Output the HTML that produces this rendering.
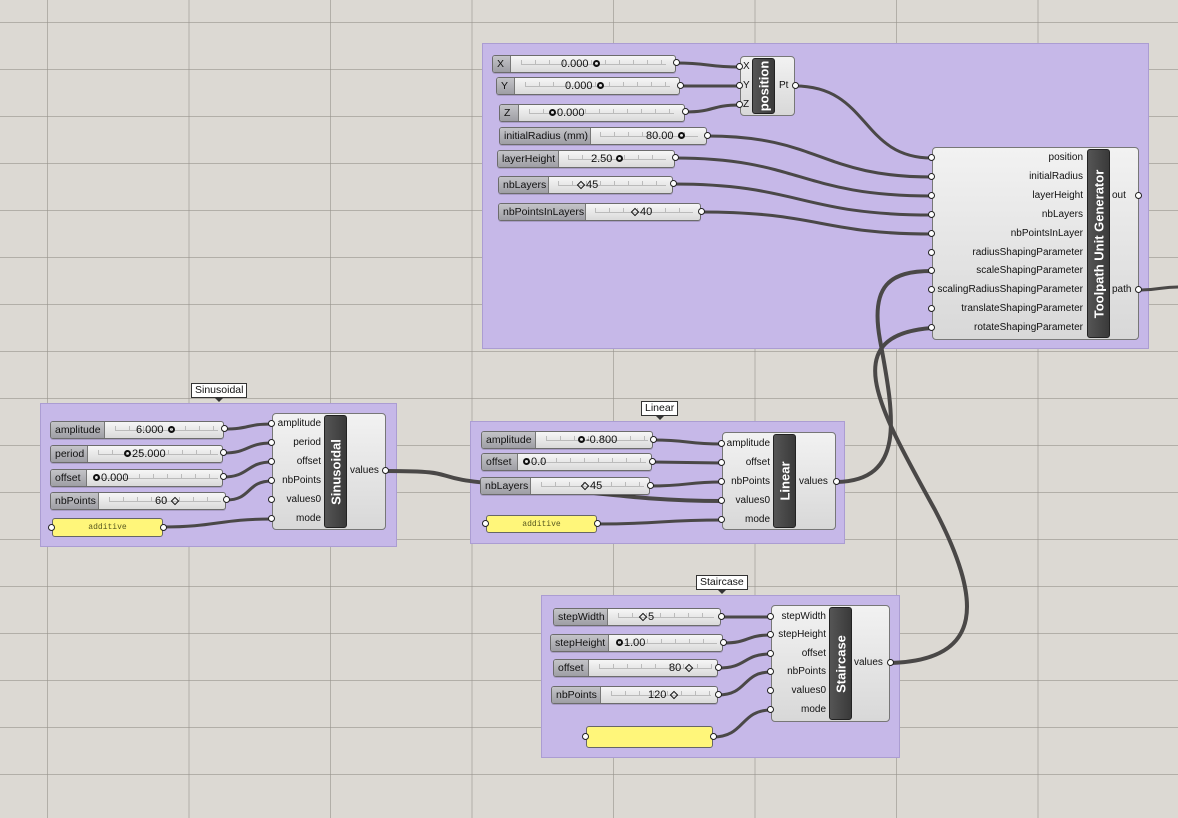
<!DOCTYPE html>
<html><head><meta charset="utf-8"><style>
*{box-sizing:border-box;margin:0;padding:0}
body{width:1178px;height:818px;overflow:hidden;position:relative;font-family:"Liberation Sans",sans-serif;
background-color:#dcd9d3;
background-image:linear-gradient(90deg,rgba(150,147,140,.6) 1px,transparent 1px),linear-gradient(0deg,rgba(150,147,140,.6) 1px,transparent 1px);
background-size:141.5px 47px;background-position:47px 23px}
.a{position:absolute}
.grp{position:absolute;background:#c6b8e8;border:1px solid #ab9dd2}
.tag{position:absolute;background:#fff;border:1px solid #333;font-size:10.5px;line-height:13px;padding:0 3px;color:#111}
.tag:after{content:"";position:absolute;left:50%;bottom:-5px;margin-left:-4px;border:4px solid transparent;border-top:4px solid #333;border-bottom:0}
.sl{position:absolute;height:18px;border:1px solid #6c6c6c;border-radius:3px;background:linear-gradient(#f6f6f6,#dadada);box-shadow:0 1px 0 rgba(0,0,0,.15)}
.sl .lb{position:absolute;left:0;top:0;bottom:0;background:linear-gradient(#c4c4c8,#9e9ea4);border-right:1px solid #777;border-radius:2px 0 0 2px;font-size:10.5px;line-height:16px;padding-left:4px;color:#111;white-space:nowrap;overflow:hidden}
.sl .tk{position:absolute;top:4px;height:5px;border-bottom:1px solid #bbb;background:repeating-linear-gradient(90deg,#bbb 0 1px,transparent 1px 14px)}
.sl .v{position:absolute;top:0;font-size:11px;line-height:16px;color:#111;white-space:nowrap}
i.c{display:inline-block;width:7px;height:7px;border:2px solid #111;border-radius:50%;margin:0 1px}
i.d{display:inline-block;width:6px;height:6px;border:1.5px solid #111;transform:rotate(45deg);margin:0 2px}
.nub{position:absolute;width:7px;height:7px;border:1.5px solid #222;border-radius:50%;background:#fff}
.cmp{position:absolute;border:1px solid #777;border-radius:4px;background:linear-gradient(#f2f2f2,#d8d8d8)}
.bar{position:absolute;background:linear-gradient(90deg,#555,#3a3a3a);border:1px solid #222;border-radius:3px}
.bar span{position:absolute;left:50%;top:50%;transform:translate(-50%,-50%) rotate(-90deg);color:#fff;font-weight:bold;font-size:13px;white-space:nowrap}
.pl{position:absolute;font-size:10px;color:#111;white-space:nowrap;line-height:12px}
.pan{position:absolute;background:#fff67a;border:1px solid #666;border-radius:3px;font-family:"Liberation Mono",monospace;font-size:8px;color:#5a5a20;text-align:center;line-height:18px}
</style></head><body>

<div class="grp" style="left:482px;top:43px;width:667px;height:306px"></div>
<div class="grp" style="left:40px;top:403px;width:357px;height:144px"></div>
<div class="tag" style="left:191px;top:383px">Sinusoidal</div>
<div class="grp" style="left:470px;top:421px;width:375px;height:123px"></div>
<div class="tag" style="left:641px;top:401px">Linear</div>
<div class="grp" style="left:541px;top:595px;width:359px;height:163px"></div>
<div class="tag" style="left:696px;top:575px">Staircase</div>

<svg class="a" style="left:0;top:0" width="1178" height="818" fill="none" stroke="#4a4847" stroke-linecap="round">
<g stroke-width="3">
<path d="M676,63 C710,63 706,67 740,67"/>
<path d="M680,86 L740,86"/>
<path d="M685,112 C715,112 710,105 740,105"/>
<path d="M795,86 C870,86 860,158 932,158"/>
<path d="M707,136 C820,136 820,177 932,177"/>
<path d="M675,158 C800,158 800,196 932,196"/>
<path d="M673,184 C800,184 800,215 932,215"/>
<path d="M701,212 C820,212 820,234 932,234"/>
<path d="M1138,290 C1160,290 1160,287 1178,287"/>
<path d="M224,429 C250,429 246,424 272,424"/>
<path d="M223,453 C250,453 246,443 272,443"/>
<path d="M223,477 C250,477 246,462 272,462"/>
<path d="M226,500 C252,500 246,481 272,481"/>
<path d="M163,527 C215,527 220,519 272,519"/>
<path d="M653,440 C690,440 685,444 722,444"/>
<path d="M652,462 L722,463"/>
<path d="M650,486 C690,486 685,482 722,482"/>
<path d="M597,524 C660,524 660,520 722,520"/>
<path d="M721,617 L771,617"/>
<path d="M723,643 C750,643 745,635 771,635"/>
<path d="M718,668 C748,668 742,654 771,654"/>
<path d="M718,695 C748,695 742,672 771,672"/>
<path d="M713,737 C745,737 740,710 771,710"/>
</g>
<g stroke-width="4">
<path d="M385,471 C470,471 420,478 500,484 C600,492 640,501 722,501"/>
<path d="M837,482 C905,480 895,420 880,340 C870,285 890,271 932,271"/>
<path d="M891,663 C985,660 982,600 935,510 C880,410 835,335 932,328"/>
</g>
</svg>

<div class="sl" style="left:492px;top:55px;width:184px"><div class="lb" style="width:18px">X</div><div class="tk" style="left:28px;width:145px"></div><div class="v" style="left:68px">0.000 <i class="c"></i></div></div>
<div class="sl" style="left:496px;top:77px;width:184px"><div class="lb" style="width:18px">Y</div><div class="tk" style="left:28px;width:145px"></div><div class="v" style="left:68px">0.000 <i class="c"></i></div></div>
<div class="sl" style="left:499px;top:104px;width:186px"><div class="lb" style="width:19px">Z</div><div class="tk" style="left:29px;width:145px"></div><div class="v" style="left:48px"><i class="c"></i>0.000</div></div>
<div class="sl" style="left:499px;top:127px;width:208px"><div class="lb" style="width:91px">initialRadius (mm)</div><div class="tk" style="left:100px;width:98px"></div><div class="v" style="left:146px">80.00 <i class="c"></i></div></div>
<div class="sl" style="left:497px;top:150px;width:178px"><div class="lb" style="width:61px">layerHeight</div><div class="tk" style="left:70px;width:98px"></div><div class="v" style="left:93px">2.50 <i class="c"></i></div></div>
<div class="sl" style="left:498px;top:176px;width:175px"><div class="lb" style="width:50px">nbLayers</div><div class="tk" style="left:59px;width:108px"></div><div class="v" style="left:77px"><i class="d"></i>45</div></div>
<div class="sl" style="left:498px;top:203px;width:203px"><div class="lb" style="width:87px">nbPointsInLayers</div><div class="tk" style="left:96px;width:98px"></div><div class="v" style="left:131px"><i class="d"></i>40</div></div>

<div class="cmp" style="left:740px;top:56px;width:55px;height:60px"></div>
<div class="bar" style="left:752px;top:58px;width:23px;height:56px"><span>position</span></div>
<div class="pl" style="left:743px;top:61px">X</div><div class="pl" style="left:743px;top:80px">Y</div><div class="pl" style="left:743px;top:99px">Z</div>
<div class="pl" style="left:779px;top:80px">Pt</div>
<div class="nub" style="left:736px;top:63px"></div><div class="nub" style="left:736px;top:82px"></div><div class="nub" style="left:736px;top:101px"></div><div class="nub" style="left:792px;top:82px"></div>

<div class="cmp" style="left:932px;top:147px;width:207px;height:193px"></div>
<div class="bar" style="left:1087px;top:149px;width:23px;height:189px"><span>Toolpath Unit Generator</span></div>
<div class="pl" style="right:95px;top:152px">position</div>
<div class="pl" style="right:95px;top:171px">initialRadius</div>
<div class="pl" style="right:95px;top:190px">layerHeight</div>
<div class="pl" style="right:95px;top:209px">nbLayers</div>
<div class="pl" style="right:95px;top:228px">nbPointsInLayer</div>
<div class="pl" style="right:95px;top:247px">radiusShapingParameter</div>
<div class="pl" style="right:95px;top:265px">scaleShapingParameter</div>
<div class="pl" style="right:95px;top:284px">scalingRadiusShapingParameter</div>
<div class="pl" style="right:95px;top:303px">translateShapingParameter</div>
<div class="pl" style="right:95px;top:322px">rotateShapingParameter</div>
<div class="pl" style="left:1112px;top:190px">out</div>
<div class="pl" style="left:1112px;top:284px">path</div>
<div class="nub" style="left:928px;top:154px"></div><div class="nub" style="left:928px;top:173px"></div><div class="nub" style="left:928px;top:192px"></div><div class="nub" style="left:928px;top:211px"></div><div class="nub" style="left:928px;top:230px"></div><div class="nub" style="left:928px;top:249px"></div><div class="nub" style="left:928px;top:267px"></div><div class="nub" style="left:928px;top:286px"></div><div class="nub" style="left:928px;top:305px"></div><div class="nub" style="left:928px;top:324px"></div>
<div class="nub" style="left:1135px;top:192px"></div><div class="nub" style="left:1135px;top:286px"></div>

<div class="sl" style="left:50px;top:421px;width:174px"><div class="lb" style="width:54px">amplitude</div><div class="tk" style="left:64px;width:103px"></div><div class="v" style="left:85px">6.000 <i class="c"></i></div></div>
<div class="sl" style="left:50px;top:445px;width:173px"><div class="lb" style="width:37px">period</div><div class="tk" style="left:47px;width:120px"></div><div class="v" style="left:72px"><i class="c"></i>25.000</div></div>
<div class="sl" style="left:50px;top:469px;width:173px"><div class="lb" style="width:36px">offset</div><div class="tk" style="left:46px;width:121px"></div><div class="v" style="left:41px"><i class="c"></i>0.000</div></div>
<div class="sl" style="left:50px;top:492px;width:176px"><div class="lb" style="width:48px">nbPoints</div><div class="tk" style="left:58px;width:112px"></div><div class="v" style="left:104px">60 <i class="d"></i></div></div>
<div class="pan" style="left:52px;top:518px;width:111px;height:19px">additive</div>
<div class="nub" style="left:48px;top:524px"></div><div class="nub" style="left:160px;top:524px"></div>
<div class="cmp" style="left:272px;top:413px;width:114px;height:117px"></div>
<div class="bar" style="left:324px;top:415px;width:23px;height:113px"><span>Sinusoidal</span></div>
<div class="pl" style="right:857px;top:418px">amplitude</div>
<div class="pl" style="right:857px;top:437px">period</div>
<div class="pl" style="right:857px;top:456px">offset</div>
<div class="pl" style="right:857px;top:475px">nbPoints</div>
<div class="pl" style="right:857px;top:494px">values0</div>
<div class="pl" style="right:857px;top:513px">mode</div>
<div class="pl" style="left:350px;top:465px">values</div>
<div class="nub" style="left:268px;top:420px"></div><div class="nub" style="left:268px;top:439px"></div><div class="nub" style="left:268px;top:458px"></div><div class="nub" style="left:268px;top:477px"></div><div class="nub" style="left:268px;top:496px"></div><div class="nub" style="left:268px;top:515px"></div><div class="nub" style="left:382px;top:467px"></div>
<div class="nub" style="left:221px;top:425px"></div><div class="nub" style="left:220px;top:449px"></div><div class="nub" style="left:220px;top:473px"></div><div class="nub" style="left:223px;top:496px"></div>

<div class="sl" style="left:481px;top:431px;width:172px"><div class="lb" style="width:54px">amplitude</div><div class="tk" style="left:64px;width:102px"></div><div class="v" style="left:95px"><i class="c"></i>-0.800</div></div>
<div class="sl" style="left:481px;top:453px;width:171px"><div class="lb" style="width:36px">offset</div><div class="tk" style="left:46px;width:118px"></div><div class="v" style="left:40px"><i class="c"></i>0.0</div></div>
<div class="sl" style="left:480px;top:477px;width:170px"><div class="lb" style="width:50px">nbLayers</div><div class="tk" style="left:60px;width:103px"></div><div class="v" style="left:99px"><i class="d"></i>45</div></div>
<div class="pan" style="left:486px;top:515px;width:111px;height:18px">additive</div>
<div class="nub" style="left:482px;top:520px"></div><div class="nub" style="left:594px;top:520px"></div>
<div class="nub" style="left:650px;top:436px"></div><div class="nub" style="left:649px;top:458px"></div><div class="nub" style="left:647px;top:482px"></div>
<div class="cmp" style="left:722px;top:432px;width:114px;height:98px"></div>
<div class="bar" style="left:773px;top:434px;width:23px;height:94px"><span>Linear</span></div>
<div class="pl" style="right:408px;top:438px">amplitude</div>
<div class="pl" style="right:408px;top:457px">offset</div>
<div class="pl" style="right:408px;top:476px">nbPoints</div>
<div class="pl" style="right:408px;top:495px">values0</div>
<div class="pl" style="right:408px;top:514px">mode</div>
<div class="pl" style="left:799px;top:476px">values</div>
<div class="nub" style="left:718px;top:440px"></div><div class="nub" style="left:718px;top:459px"></div><div class="nub" style="left:718px;top:478px"></div><div class="nub" style="left:718px;top:497px"></div><div class="nub" style="left:718px;top:516px"></div><div class="nub" style="left:833px;top:478px"></div>

<div class="sl" style="left:553px;top:608px;width:168px"><div class="lb" style="width:54px">stepWidth</div><div class="tk" style="left:64px;width:96px"></div><div class="v" style="left:84px"><i class="d"></i>5</div></div>
<div class="sl" style="left:550px;top:634px;width:173px"><div class="lb" style="width:58px">stepHeight</div><div class="tk" style="left:68px;width:98px"></div><div class="v" style="left:64px"><i class="c"></i>1.00</div></div>
<div class="sl" style="left:553px;top:659px;width:165px"><div class="lb" style="width:35px">offset</div><div class="tk" style="left:45px;width:113px"></div><div class="v" style="left:115px">80 <i class="d"></i></div></div>
<div class="sl" style="left:551px;top:686px;width:167px"><div class="lb" style="width:49px">nbPoints</div><div class="tk" style="left:59px;width:100px"></div><div class="v" style="left:96px">120 <i class="d"></i></div></div>
<div class="pan" style="left:586px;top:726px;width:127px;height:22px"></div>
<div class="nub" style="left:582px;top:733px"></div><div class="nub" style="left:710px;top:733px"></div>
<div class="nub" style="left:718px;top:613px"></div><div class="nub" style="left:720px;top:639px"></div><div class="nub" style="left:715px;top:664px"></div><div class="nub" style="left:715px;top:691px"></div>
<div class="cmp" style="left:771px;top:605px;width:119px;height:117px"></div>
<div class="bar" style="left:829px;top:607px;width:23px;height:113px"><span>Staircase</span></div>
<div class="pl" style="right:352px;top:611px">stepWidth</div>
<div class="pl" style="right:352px;top:629px">stepHeight</div>
<div class="pl" style="right:352px;top:648px">offset</div>
<div class="pl" style="right:352px;top:666px">nbPoints</div>
<div class="pl" style="right:352px;top:685px">values0</div>
<div class="pl" style="right:352px;top:704px">mode</div>
<div class="pl" style="left:854px;top:657px">values</div>
<div class="nub" style="left:767px;top:613px"></div><div class="nub" style="left:767px;top:631px"></div><div class="nub" style="left:767px;top:650px"></div><div class="nub" style="left:767px;top:668px"></div><div class="nub" style="left:767px;top:687px"></div><div class="nub" style="left:767px;top:706px"></div><div class="nub" style="left:887px;top:659px"></div>

<div class="nub" style="left:673px;top:59px"></div><div class="nub" style="left:677px;top:82px"></div><div class="nub" style="left:682px;top:108px"></div><div class="nub" style="left:704px;top:132px"></div><div class="nub" style="left:672px;top:154px"></div><div class="nub" style="left:670px;top:180px"></div><div class="nub" style="left:698px;top:208px"></div>
</body></html>
